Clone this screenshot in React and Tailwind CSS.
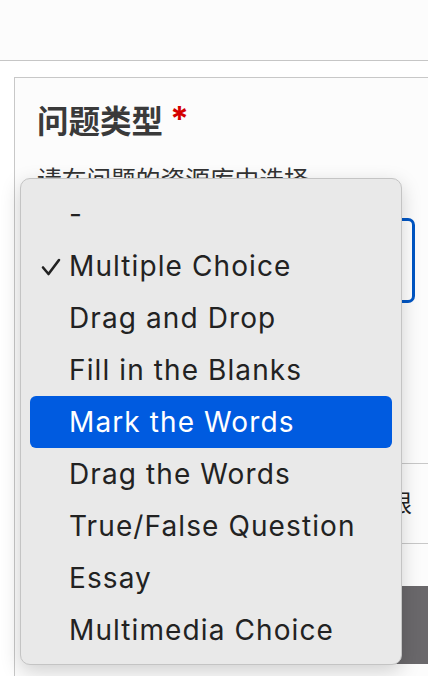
const options = [
  '-',
  'Multiple Choice',
  'Drag and Drop',
  'Fill in the Blanks',
  'Mark the Words',
  'Drag the Words',
  'True/False Question',
  'Essay',
  'Multimedia Choice',
];

function SelectMenu({ selected, active }) {
  return (
    <div className="absolute left-[20px] top-[178px] w-[382px] h-[487px] rounded-[10px] border border-[#c4c4c4] bg-[#e9e9e9] shadow-[0_6px_20px_rgba(0,0,0,0.18)] px-[9px] py-[9px]">
      {options.map((opt, i) => (
        <div
          key={opt}
          className={
            'relative flex items-center h-[52px] rounded-[6px] pl-[39px] text-[28px] tracking-[1.1px] ' +
            (i === active ? 'bg-[#005be0] text-white' : 'text-[#222222]')
          }
        >
          {i === selected && (
            <svg
              className="absolute left-[11px] top-[18px]"
              width="20"
              height="18"
              viewBox="0 0 20 18"
              fill="none"
              stroke="currentColor"
              strokeWidth="2.6"
              strokeLinecap="round"
              strokeLinejoin="round"
            >
              <path d="M2 9.5 L7.5 16 L18 2" />
            </svg>
          )}
          {opt}
        </div>
      ))}
    </div>
  );
}

export default function App() {
  return (
    <div
      className="relative w-[428px] h-[676px] overflow-hidden bg-white"
      style={{ fontFamily: 'Inter, "Noto Sans CJK SC", sans-serif' }}
    >
      <div className="h-[61px] bg-[#fcfcfc] border-b border-[#c6c6c6]" />
      <div className="h-[16px]" />
      <div className="ml-[14px] w-[440px] border border-[#c8c8c8] bg-[#fcfcfc] pt-[24px] pl-[22px]">
        <h2 className="flex items-start text-[31.5px] leading-[40px] font-bold text-[#3a3a3a]">
          问题类型
          <span className="ml-[7px] text-[34px] leading-[34px] text-[#d40000]">*</span>
        </h2>
        <p className="mt-[22px] text-[24.7px] leading-[32px] text-[#333333]">请在问题的资源库中选择</p>
        <div className="mt-[22px] w-[378px] h-[85px] rounded-[7px] border-[3px] border-[#0056c4] bg-white" />
        <div className="mt-[160px] h-[81px] border-y border-[#c8c8c8] flex items-center">
          <div className="w-[375px] text-right text-[24px] text-[#222222]">访问权限</div>
        </div>
        <div className="mt-[42px] h-[78px] bg-[#6a686b]" />
        <div className="h-[20px]" />
      </div>
      <SelectMenu selected={1} active={4} />
    </div>
  );
}
